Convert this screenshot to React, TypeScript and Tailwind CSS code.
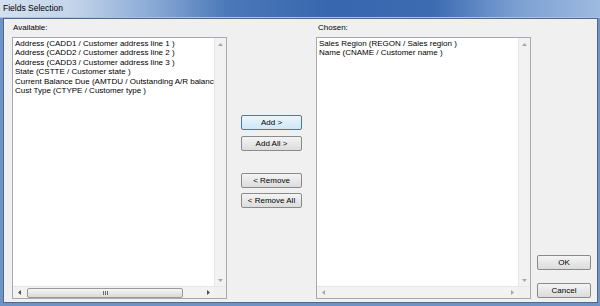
const AVAILABLE = [
  'Address (CADD1 / Customer address line 1 )',
  'Address (CADD2 / Customer address line 2 )',
  'Address (CADD3 / Customer address line 3 )',
  'State (CSTTE / Customer state )',
  'Current Balance Due (AMTDU / Outstanding A/R balance )',
  'Cust Type (CTYPE / Customer type )',
]

const CHOSEN = ['Sales Region (REGON / Sales region )', 'Name (CNAME / Customer name )']

type Dir = 'up' | 'down' | 'left' | 'right'

function Arrow({ dir, dim }: { dir: Dir; dim?: boolean }) {
  const vertical = dir === 'up' || dir === 'down'
  const pts = {
    up: '0,3 2.5,0 5,3',
    down: '0,0 2.5,3 5,0',
    left: '3,0 0,2.5 3,5',
    right: '0,0 3,2.5 0,5',
  }[dir]
  return (
    <svg width={vertical ? 5 : 3} height={vertical ? 3 : 5} viewBox={vertical ? '0 0 5 3' : '0 0 3 5'}>
      <polygon points={pts} fill={dim ? '#a8a8a8' : '#505050'} />
    </svg>
  )
}

function ListBox({ items, thumb }: { items: string[]; thumb?: boolean }) {
  return (
    <div className="flex-1 flex flex-col border border-[#a5a9b0] bg-white">
      <div className="flex-1 flex min-h-0">
        {/* items */}
        <div className="flex-1 overflow-hidden pl-[2px] pt-[1px]">
          {items.map((item) => (
            <div key={item} className="whitespace-nowrap text-[8px] leading-[9.4px] text-black">
              {item}
            </div>
          ))}
        </div>
        {/* vertical scrollbar */}
        <div className="w-[12px] flex flex-col justify-between bg-[#f2f2f2] border-l border-[#e6e6e6]">
          <div className="h-[12px] flex items-center justify-center">
            <Arrow dir="up" dim />
          </div>
          <div className="h-[12px] flex items-center justify-center">
            <Arrow dir="down" dim />
          </div>
        </div>
      </div>
      {/* horizontal scrollbar */}
      <div className="h-[12px] flex bg-[#f2f2f2] border-t border-[#e6e6e6]">
        <div className="flex-1 flex items-center">
          <div className="w-[12px] h-full flex items-center justify-center">
            <Arrow dir="left" dim={!thumb} />
          </div>
          <div className="flex-1 h-full flex items-center">
            {thumb && (
              <div className="ml-[2px] w-[156px] h-[10px] rounded-[2px] border border-[#9a9a9a] bg-gradient-to-b from-[#f6f6f6] to-[#d9d9d9] flex items-center justify-center gap-[1px]">
                <div className="w-px h-[4px] bg-[#6a6a6a]" />
                <div className="w-px h-[4px] bg-[#6a6a6a]" />
                <div className="w-px h-[4px] bg-[#6a6a6a]" />
              </div>
            )}
          </div>
          <div className="w-[12px] h-full flex items-center justify-center">
            <Arrow dir="right" dim={!thumb} />
          </div>
        </div>
        <div className="w-[12px] bg-[#f0f0f0]" />
      </div>
    </div>
  )
}

function Button({ label, primary }: { label: string; primary?: boolean }) {
  return (
    <div
      className={
        'h-[15px] rounded-[2px] border flex items-center justify-center text-[8px] leading-none text-black ' +
        (primary
          ? 'border-[#3c7fb1] bg-gradient-to-b from-[#eaf6fd] to-[#cfe7f8]'
          : 'border-[#8a8a8a] bg-gradient-to-b from-[#f4f4f4] to-[#dcdcdc]')
      }
    >
      {label}
    </div>
  )
}

export default function App() {
  return (
    <div
      className="w-[600px] h-[306px] flex flex-col bg-[#6e93c7] pl-[3px] pr-[2px] pb-[3px]"
      style={{ fontFamily: '"Liberation Sans", Arial, sans-serif' }}
    >
      {/* title bar */}
      <div className="-ml-[3px] -mr-[2px] h-[17px] flex items-center pl-[3px] bg-[linear-gradient(90deg,#d3e0ef_0%,#c4d5ea_12%,#86a7d4_26%,#4a78b8_38%,#3867af_55%,#3c6bb2_72%,#7b9fd2_86%,#9dbae0_100%)]">
        <span className="text-[8.5px] text-black">Fields Selection</span>
      </div>
      <div className="-ml-[3px] -mr-[2px] h-px bg-[#a9c1e3]" />

      {/* client area */}
      <div className="flex-1 flex border border-[#51698f] bg-[#f0f0f0] pl-[8px] pr-[6px] pb-[3px]">
        {/* Available */}
        <div className="w-[215px] flex flex-col">
          <div className="h-[18px] pt-[4px] pl-[1px] text-[8px] leading-[9.4px] text-black">Available:</div>
          <ListBox items={AVAILABLE} thumb />
        </div>

        {/* move buttons */}
        <div className="ml-[14px] w-[61px] flex flex-col pt-[96px]">
          <Button label="Add >" primary />
          <div className="mt-[6px]">
            <Button label="Add All >" />
          </div>
          <div className="mt-[22px]">
            <Button label="< Remove" />
          </div>
          <div className="mt-[5px]">
            <Button label="< Remove All" />
          </div>
        </div>

        {/* Chosen */}
        <div className="ml-[14px] w-[215px] flex flex-col">
          <div className="h-[18px] pt-[4px] pl-[2px] text-[8px] leading-[9.4px] text-black">Chosen:</div>
          <ListBox items={CHOSEN} />
        </div>

        {/* dialog buttons */}
        <div className="ml-[6px] w-[54px] flex flex-col justify-end pb-[1px]">
          <Button label="OK" />
          <div className="mt-[13px]">
            <Button label="Cancel" />
          </div>
        </div>
      </div>
    </div>
  )
}
